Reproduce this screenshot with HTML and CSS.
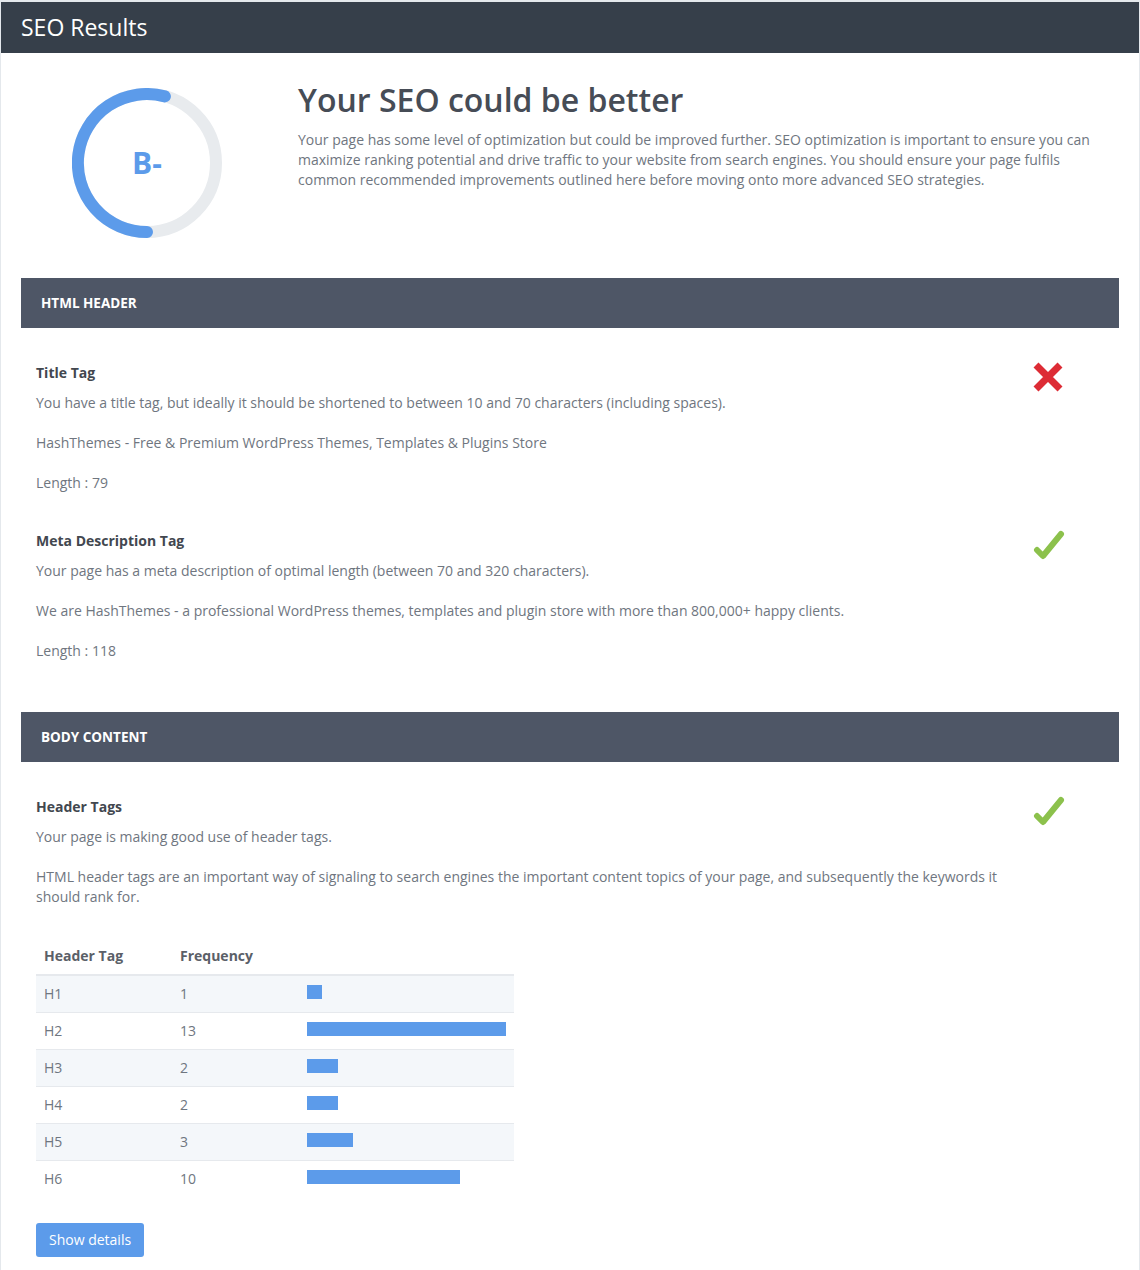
FILE: index.html
```html
<!DOCTYPE html>
<html lang="en">
<head>
<meta charset="utf-8">
<title>SEO Results</title>
<link rel="stylesheet" href="styles.css">
</head>
<body>
<div class="page">
  <header class="topbar">SEO Results</header>
  <div class="content">
    <div class="summary">
      <div class="ring">
        <svg width="150" height="150" viewBox="0 0 150 150">
          <circle cx="75" cy="75" r="69" fill="none" stroke="#e8ebee" stroke-width="12"/>
          <path d="M 75 144 A 69 69 0 1 1 92.9 8.4" fill="none" stroke="#5c9bea" stroke-width="12" stroke-linecap="round"/>
        </svg>
        <span class="grade">B-</span>
      </div>
      <div class="summary-text">
        <h1 class="summary-title">Your SEO could be better</h1>
        <p class="summary-desc">Your page has some level of optimization but could be improved further. SEO optimization is important to ensure you can maximize ranking potential and drive traffic to your website from search engines. You should ensure your page fulfils common recommended improvements outlined here before moving onto more advanced SEO strategies.</p>
      </div>
    </div>

    <section class="section">
      <h2 class="section-head">HTML HEADER</h2>
      <div class="section-body">
        <div class="item">
          <div class="item-text">
            <h3 class="item-title">Title Tag</h3>
            <p class="item-line">You have a title tag, but ideally it should be shortened to between 10 and 70 characters (including spaces).</p>
            <p class="item-line">HashThemes - Free &amp; Premium WordPress Themes, Templates &amp; Plugins Store</p>
            <p class="item-line">Length : 79</p>
          </div>
          <div class="item-icon">
            <svg class="icon-x" width="30" height="30" viewBox="0 0 30 30">
              <path d="M3 3 L27 27 M27 3 L3 27" stroke="#dd2c35" stroke-width="7" fill="none"/>
            </svg>
          </div>
        </div>
        <div class="item">
          <div class="item-text">
            <h3 class="item-title">Meta Description Tag</h3>
            <p class="item-line">Your page has a meta description of optimal length (between 70 and 320 characters).</p>
            <p class="item-line">We are HashThemes - a professional WordPress themes, templates and plugin store with more than 800,000+ happy clients.</p>
            <p class="item-line">Length : 118</p>
          </div>
          <div class="item-icon">
            <svg class="icon-check" width="32" height="32" viewBox="0 0 32 32">
              <path d="M4 21 L10 27 L28 5" stroke="#8cc14c" stroke-width="6" fill="none" stroke-linecap="round" stroke-linejoin="round"/>
            </svg>
          </div>
        </div>
      </div>
    </section>

    <section class="section">
      <h2 class="section-head">BODY CONTENT</h2>
      <div class="section-body">
        <div class="item">
          <div class="item-text">
            <h3 class="item-title">Header Tags</h3>
            <p class="item-line">Your page is making good use of header tags.</p>
            <p class="item-line">HTML header tags are an important way of signaling to search engines the important content topics of your page, and subsequently the keywords it should rank for.</p>
            <table class="freq">
              <thead>
                <tr><th class="c1">Header Tag</th><th class="c2">Frequency</th><th class="c3"></th></tr>
              </thead>
              <tbody>
                <tr><td>H1</td><td>1</td><td><span class="bar" style="width:7.69%"></span></td></tr>
                <tr><td>H2</td><td>13</td><td><span class="bar" style="width:100%"></span></td></tr>
                <tr><td>H3</td><td>2</td><td><span class="bar" style="width:15.38%"></span></td></tr>
                <tr><td>H4</td><td>2</td><td><span class="bar" style="width:15.38%"></span></td></tr>
                <tr><td>H5</td><td>3</td><td><span class="bar" style="width:23.08%"></span></td></tr>
                <tr><td>H6</td><td>10</td><td><span class="bar" style="width:76.92%"></span></td></tr>
              </tbody>
            </table>
            <button class="btn" type="button">Show details</button>
          </div>
          <div class="item-icon">
            <svg class="icon-check" width="32" height="32" viewBox="0 0 32 32">
              <path d="M4 21 L10 27 L28 5" stroke="#8cc14c" stroke-width="6" fill="none" stroke-linecap="round" stroke-linejoin="round"/>
            </svg>
          </div>
        </div>
      </div>
    </section>
  </div>
</div>
</body>
</html>
```

FILE: styles.css
```css
* { box-sizing: border-box; }
html, body { margin: 0; padding: 0; background: #ffffff; }
body {
  font-family: "Open Sans", "Noto Sans", sans-serif;
  font-size: 14px;
  line-height: 20px;
  color: #6f7680;
}
.page {
  border: 1px solid #e4e8ec;
  border-top-width: 2px;
  border-bottom: none;
  min-height: 1268px;
}
.topbar {
  background: #363f4a;
  color: #ffffff;
  height: 51px;
  line-height: 50px;
  font-size: 23px;
  padding-left: 20px;
}
.content {
  padding: 0 20px;
}
.summary {
  display: flex;
  align-items: flex-start;
  padding-top: 35px;
  padding-bottom: 40px;
}
.ring {
  position: relative;
  width: 150px;
  height: 150px;
  margin-left: 51px;
  flex: none;
}
.ring svg { display: block; }
.grade {
  position: absolute;
  left: 0;
  right: 0;
  top: 0;
  bottom: 0;
  display: flex;
  align-items: center;
  justify-content: center;
  color: #5c9bea;
  font-weight: 700;
  font-size: 30px;
}
.summary-text {
  margin-left: 76px;
  margin-top: -8px;
}
.summary-title {
  margin: 0 0 10px;
  font-size: 32px;
  line-height: 40px;
  font-weight: 600;
  color: #464c56;
}
.summary-desc {
  margin: 0;
}
.section-head {
  margin: 0;
  background: #4e5666;
  color: #ffffff;
  height: 50px;
  line-height: 50px;
  padding-left: 20px;
  font-size: 13.5px;
  font-weight: 700;
}
.section-body {
  padding: 25px 15px 23px;
}
.item {
  display: flex;
  align-items: flex-start;
  padding-top: 10px;
  margin-bottom: 28px;
}
.item-text {
  flex: 1;
  min-width: 0;
}
.item-title {
  margin: 0 0 10px;
  font-size: 14px;
  line-height: 20px;
  font-weight: 700;
  color: #42474f;
}
.item-line {
  margin: 0 0 20px;
}
.item-line:last-child { margin-bottom: 0; }
.item-icon {
  flex: none;
  width: 32px;
  margin-left: 22px;
  margin-right: 39px;
}
.icon-x { display: block; margin-top: -1px; }
.icon-check { display: block; margin-top: -2px; }
.freq {
  border-collapse: collapse;
  width: 478px;
  margin-top: 31px;
}
.freq th {
  text-align: left;
  padding: 8px;
  font-weight: 700;
  color: #5b6068;
  border-bottom: 2px solid #e6e9ed;
}
.freq .c1 { width: 136px; }
.freq .c2 { width: 127px; }
.freq td {
  padding: 8px;
  border-top: 1px solid #e6e9ed;
}
.freq tbody tr:nth-child(odd) { background: #f4f7fa; }
.bar {
  display: block;
  height: 14px;
  margin: 1px 0 5px;
  background: #5c9bea;
}
.btn {
  margin-top: 26px;
  background: #5c9bea;
  color: #ffffff;
  border: none;
  border-radius: 3px;
  padding: 7px 13px;
  font-family: inherit;
  font-size: 14px;
  line-height: 20px;
}
```
